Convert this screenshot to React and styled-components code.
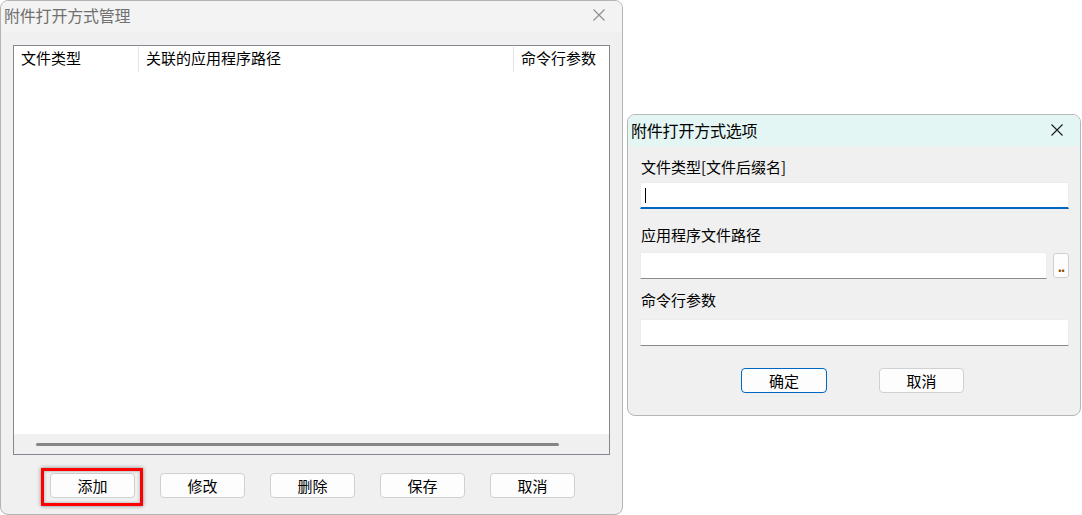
import React from 'react';
import styled, { createGlobalStyle } from 'styled-components';

const GlobalStyle = createGlobalStyle`
    html, body {
        margin: 0;
        padding: 0;
        background: #ffffff;
    }
    body {
        font-family: "Noto Sans CJK SC", "Microsoft YaHei", sans-serif;
        font-size: 15px;
        color: #000;
    }
`

const columns = [
    { title: '文件类型', width: 125 },
    { title: '关联的应用程序路径', width: 375 },
    { title: '命令行参数', width: 95 },
];

const actions = ['添加', '修改', '删除', '保存', '取消'];

function CloseIcon({ color })
{
  return (
    <svg width="12" height="12" viewBox="0 0 12 12">
        <path d="M0.5 0.5 L11.5 11.5 M11.5 0.5 L0.5 11.5" stroke={ color } strokeWidth="1.1" fill="none" />
    </svg>
  )
}

function ManagerDialog()
{
  return (
    <Manager>
        <TitleBar lift={ 3 }>
            <Title muted>附件打开方式管理</Title>
            <CloseBtn><CloseIcon color="#8e8e8e" /></CloseBtn>
        </TitleBar>
        <ManagerBody>
            <ListBox>
                <ListHeader>
                    { columns.map((c, i) => (
                        <HeaderCell key={ c.title } style={{ width: c.width }} last={ i === columns.length - 1 }>
                            { c.title }
                        </HeaderCell>
                    )) }
                </ListHeader>
                <ListRows />
                <HScroll>
                    <ScrollThumb />
                </HScroll>
            </ListBox>
            <ActionRow>
                { actions.map((a, i) => (
                    <ActionSlot key={ a }>
                        <Button w={ 85 }>{ a }</Button>
                        { i === 0 && <Highlight /> }
                    </ActionSlot>
                )) }
            </ActionRow>
        </ManagerBody>
    </Manager>
  )
}

function OptionsDialog()
{
  return (
    <Options>
        <TitleBar tinted lift={ 1 }>
            <Title>附件打开方式选项</Title>
            <CloseBtn><CloseIcon color="#1a1a1a" /></CloseBtn>
        </TitleBar>
        <OptionsBody>
            <Label top={ 0 }>文件类型[文件后缀名]</Label>
            <Input top={ 5 } focused>
                <Caret />
            </Input>
            <Label top={ 16 }>应用程序文件路径</Label>
            <PathRow>
                <Input top={ 0 } />
                <BrowseBtn>..</BrowseBtn>
            </PathRow>
            <Label top={ 11 }>命令行参数</Label>
            <Input top={ 9 } />
            <DialogButtons>
                <Button w={ 86 } primary>确定</Button>
                <Button w={ 85 }>取消</Button>
            </DialogButtons>
        </OptionsBody>
    </Options>
  )
}

export default function App()
{
  return (
    <Page>
        <GlobalStyle />
        <ManagerDialog />
        <OptionsDialog />
    </Page>
  )
}

const Page = styled.div`
    display: flex;
    align-items: flex-start;
    width: 1082px;
    height: 515px;
    overflow: hidden;
`

const Manager = styled.div`
    box-sizing: border-box;
    width: 623px;
    height: 515px;
    border: 1px solid #b4b4b4;
    border-radius: 8px;
    background: #f0f0f0;
    display: flex;
    flex-direction: column;
    overflow: hidden;
`

const TitleBar = styled.div`
    box-sizing: border-box;
    display: flex;
    align-items: center;
    justify-content: space-between;
    height: 31px;
    flex: none;
    padding-left: 3px;
    padding-bottom: ${ p => p.lift || 0 }px;
    background: ${ p => p.tinted ? '#e3f6f4' : '#f3f3f3' };
`

const Title = styled.div`
    font-size: 16px;
    line-height: 20px;
    color: ${ p => p.muted ? '#707070' : '#000' };
    letter-spacing: -0.2px;
`

const CloseBtn = styled.div`
    display: flex;
    align-items: center;
    justify-content: center;
    width: 46px;
    height: 28px;
`

const ManagerBody = styled.div`
    flex: 1;
    display: flex;
    flex-direction: column;
    padding: 13px 12px 0 12px;
`

const ListBox = styled.div`
    box-sizing: border-box;
    width: 597px;
    height: 410px;
    border: 1px solid #828790;
    background: #ffffff;
    display: flex;
    flex-direction: column;
`

const ListHeader = styled.div`
    display: flex;
    height: 26px;
    flex: none;
    align-items: center;
`

const HeaderCell = styled.div`
    box-sizing: border-box;
    height: 25px;
    line-height: 22px;
    padding-left: 7px;
    white-space: nowrap;
    overflow: hidden;
    border-right: ${ p => p.last ? 'none' : '1px solid #e3e3e3' };
`

const ListRows = styled.div`
    flex: 1;
`

const HScroll = styled.div`
    height: 20px;
    flex: none;
    display: flex;
    align-items: center;
    padding-left: 22px;
    background: #f0f0f0;
`

const ScrollThumb = styled.div`
    width: 523px;
    height: 3px;
    border-radius: 2px;
    background: #858585;
`

const ActionRow = styled.div`
    display: flex;
    gap: 25px;
    margin-top: 18px;
    padding-left: 37px;
`

const ActionSlot = styled.div`
    position: relative;
    display: flex;
`

const Highlight = styled.div`
    position: absolute;
    left: -9px;
    right: -8px;
    top: -5px;
    bottom: -8px;
    border: 3px solid #ff0000;
    box-shadow: 0 0 4px rgba(0, 0, 0, 0.45), inset 0 0 3px rgba(0, 0, 0, 0.35);
    pointer-events: none;
`

const Button = styled.div`
    box-sizing: border-box;
    width: ${ p => p.w }px;
    height: 25px;
    display: flex;
    align-items: center;
    justify-content: center;
    font-size: 15px;
    padding-bottom: 1px;
    background: #fdfdfd;
    border: 1px solid ${ p => p.primary ? '#0067c0' : '#d0d0d0' };
    border-radius: 4px;
`

const Options = styled.div`
    box-sizing: border-box;
    width: 454px;
    height: 302px;
    margin-top: 114px;
    margin-left: 4px;
    border: 1px solid #b6b6b6;
    border-radius: 8px;
    background: #f0f0f0;
    display: flex;
    flex-direction: column;
    overflow: hidden;
`

const OptionsBody = styled.div`
    display: flex;
    flex-direction: column;
    padding: 11px 11px 0 12px;
`

const Label = styled.div`
    height: 20px;
    line-height: 20px;
    margin-top: ${ p => p.top }px;
    padding-left: 1px;
`

const Input = styled.div`
    box-sizing: border-box;
    flex: 1;
    height: 27px;
    min-height: 27px;
    margin-top: ${ p => p.top }px;
    background: #ffffff;
    border: 1px solid #ececec;
    border-bottom: ${ p => p.focused ? '2px solid #0067c0' : '1px solid #8a8a8a' };
    border-radius: 2px 2px 0 0;
    display: flex;
    align-items: center;
    padding-left: 4px;
`

const Caret = styled.span`
    width: 1px;
    height: 15px;
    background: #000;
    margin-top: 1px;
`

const PathRow = styled.div`
    display: flex;
    align-items: center;
    gap: 6px;
    margin-top: 7px;
`

const BrowseBtn = styled.div`
    box-sizing: border-box;
    width: 16px;
    height: 25px;
    flex: none;
    border: 1px solid #cfcfcf;
    border-radius: 3px;
    background: #fdfdfd;
    font-size: 13px;
    font-weight: bold;
    line-height: 26px;
    text-align: center;
    color: #8a4800;
    letter-spacing: -1px;
`

const DialogButtons = styled.div`
    display: flex;
    justify-content: center;
    gap: 52px;
    margin-top: 22px;
    padding-right: 4px;
`
